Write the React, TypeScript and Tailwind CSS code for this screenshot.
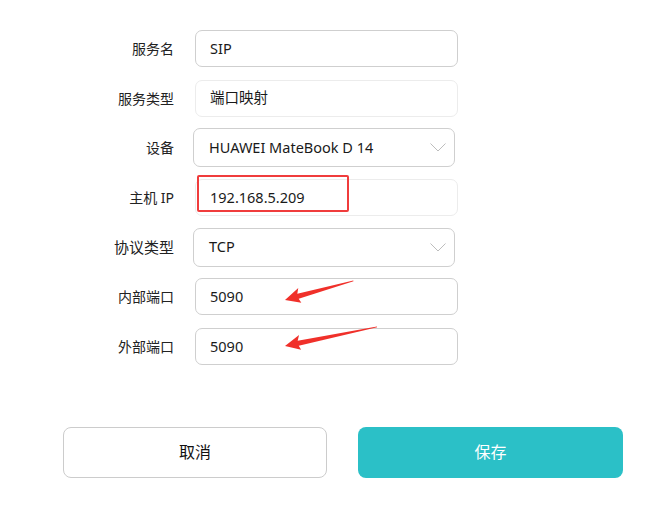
import React from "react";

type Field = {
  label: string;
  value: string;
  kind: "input" | "muted" | "select";
  labelSize?: string;
};

const fields: Field[] = [
  { label: "服务名", value: "SIP", kind: "input" },
  { label: "服务类型", value: "端口映射", kind: "muted" },
  { label: "设备", value: "HUAWEI MateBook D 14", kind: "select" },
  { label: "主机 IP", value: "192.168.5.209", kind: "muted" },
  { label: "协议类型", value: "TCP", kind: "select", labelSize: "text-[15px]" },
  { label: "内部端口", value: "5090", kind: "input" },
  { label: "外部端口", value: "5090", kind: "input" },
];

const font = { fontFamily: '"Noto Sans", "Noto Sans CJK SC", sans-serif' };

function Chevron() {
  return (
    <svg width="16" height="9" viewBox="0 0 16 9" className="shrink-0">
      <path d="M0.5 0.5 L8 8 L15.5 0.5" fill="none" stroke="#bdbdbd" strokeWidth="1" />
    </svg>
  );
}

function Row({ field }: { field: Field }) {
  const isSelect = field.kind === "select";
  return (
    <div className="flex items-center h-[49.7px]">
      <div className={`w-[174px] text-right text-[#222] ${field.labelSize ?? "text-[14px]"}`}>
        {field.label}
      </div>
      {isSelect ? (
        <div className="ml-[19px] w-[262px] h-[39px] flex items-center justify-between pl-[15px] pr-[8px] rounded-[7px] border border-[#cfcfcf] bg-white">
          <span className="text-[14.5px] text-[#1a1a1a]">{field.value}</span>
          <Chevron />
        </div>
      ) : (
        <div
          className={`ml-[21px] w-[263px] h-[37px] flex items-center pl-[14px] rounded-[7px] border bg-white ${
            field.kind === "muted" ? "border-[#ececec]" : "border-[#cfcfcf]"
          }`}
        >
          <span className="text-[14.5px] text-[#1a1a1a]">{field.value}</span>
        </div>
      )}
    </div>
  );
}

function Arrow({ x, y, len, angle }: { x: number; y: number; len: number; angle: number }) {
  return (
    <g transform={`translate(${x} ${y}) rotate(${angle})`}>
      <polygon
        points={`0,0 16,-8 13.5,-2.6 ${len},-0.4 ${len},0.4 13.5,2.6 15,7`}
        fill="#f0302a"
      />
    </g>
  );
}

export default function App() {
  return (
    <div className="relative w-[672px] h-[508px] bg-white overflow-hidden" style={font}>
      <div className="flex flex-col pt-[23.6px]">
        {fields.map((f) => (
          <Row key={f.label} field={f} />
        ))}
      </div>

      <div className="flex gap-[31px] pl-[63px] mt-[55.5px]">
        <button className="w-[264px] h-[51px] rounded-[8px] border border-[#cccccc] bg-white text-[16px] text-[#111]">
          取消
        </button>
        <button className="w-[265px] h-[51px] rounded-[8px] bg-[#2bc0c7] text-[16px] text-white">
          保存
        </button>
      </div>

      {/* annotations */}
      <div className="absolute left-[197px] top-[175px] w-[152px] h-[37px] border-2 border-[#f03c3c] rounded-[2px]" />
      <svg className="absolute left-0 top-0 pointer-events-none" width="672" height="508">
        <Arrow x={285} y={300} len={71} angle={-15.6} />
        <Arrow x={285} y={346} len={94} angle={-11.7} />
      </svg>
    </div>
  );
}
